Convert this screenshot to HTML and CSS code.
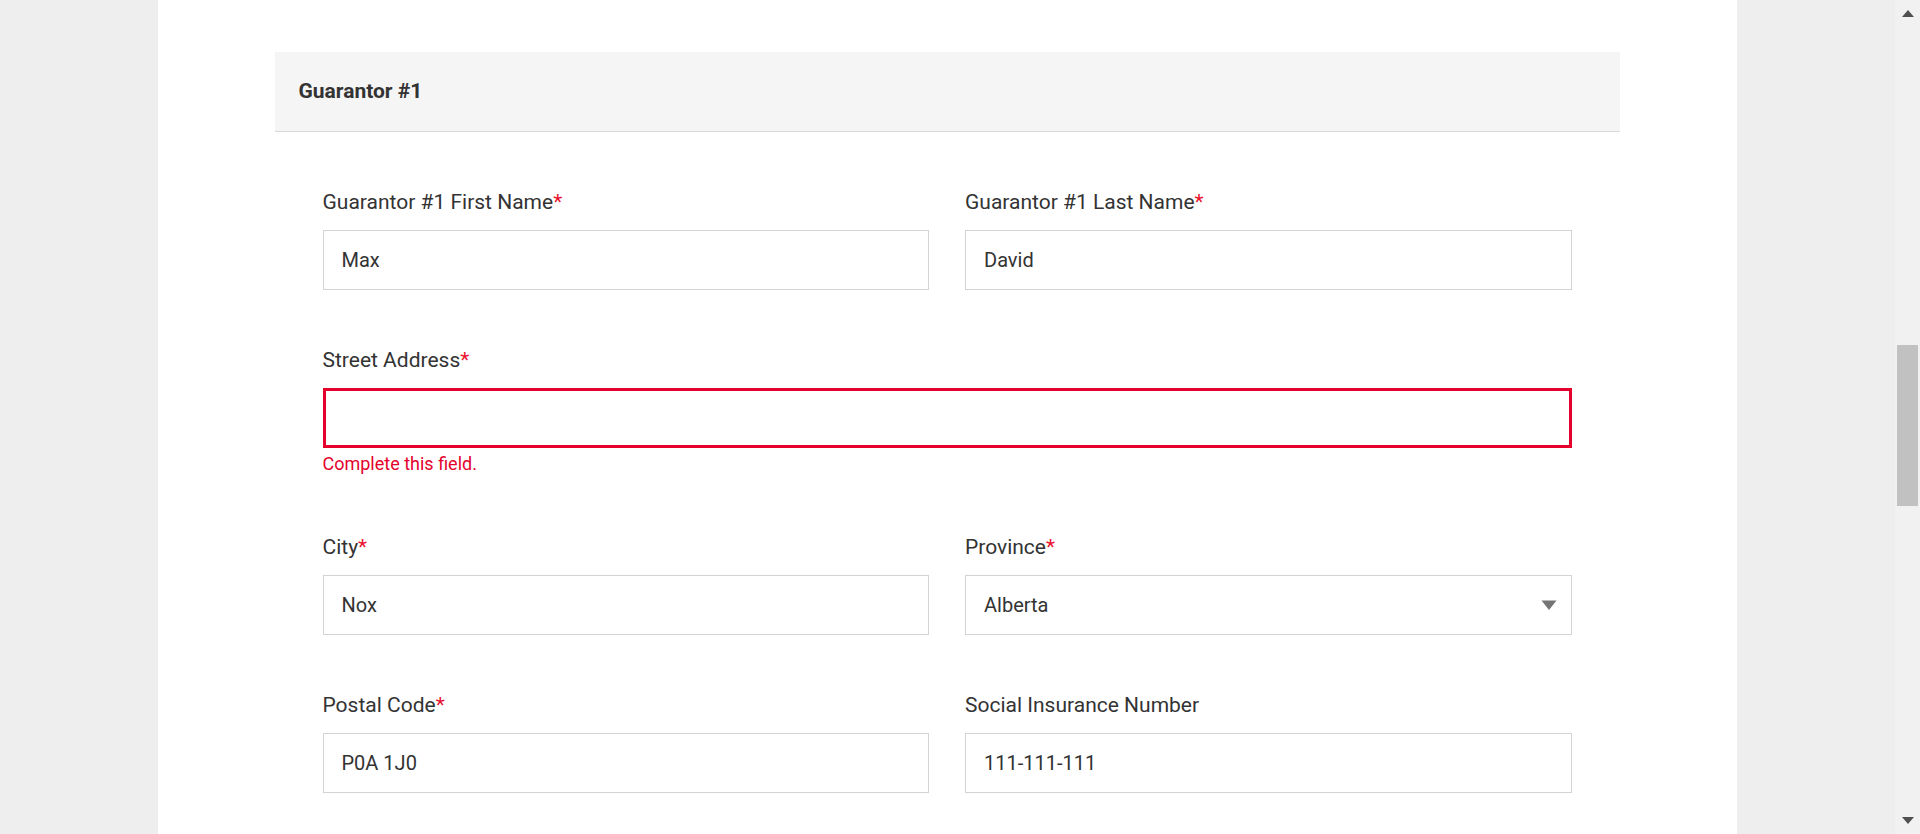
FILE: index.html
```html
<!DOCTYPE html>
<html lang="en">
<head>
<meta charset="utf-8">
<title>Guarantor #1</title>
<link rel="stylesheet" href="styles.css">
</head>
<body>
<div class="page">
  <main class="panel">
    <section class="card">
      <header class="card-header">
        <h2 class="card-title">Guarantor #1</h2>
      </header>
      <form class="form-grid">
        <div class="field">
          <label class="field-label" for="g1-first">Guarantor #1 First Name<span class="req">*</span></label>
          <input class="field-input" id="g1-first" type="text" value="Max">
        </div>
        <div class="field">
          <label class="field-label" for="g1-last">Guarantor #1 Last Name<span class="req">*</span></label>
          <input class="field-input" id="g1-last" type="text" value="David">
        </div>
        <div class="field field-wide">
          <label class="field-label" for="g1-street">Street Address<span class="req">*</span></label>
          <input class="field-input field-input-error" id="g1-street" type="text" value="">
          <div class="field-error">Complete this field.</div>
        </div>
        <div class="field">
          <label class="field-label" for="g1-city">City<span class="req">*</span></label>
          <input class="field-input" id="g1-city" type="text" value="Nox">
        </div>
        <div class="field">
          <label class="field-label" for="g1-prov">Province<span class="req">*</span></label>
          <div class="select-wrap">
            <select class="field-input field-select" id="g1-prov">
              <option selected>Alberta</option>
              <option>British Columbia</option>
              <option>Manitoba</option>
              <option>Ontario</option>
            </select>
            <svg class="select-arrow" width="16" height="10" viewBox="0 0 16 10" aria-hidden="true"><path d="M0.5 0.5 H15.5 L8 10 Z" fill="#757575"/></svg>
          </div>
        </div>
        <div class="field">
          <label class="field-label" for="g1-postal">Postal Code<span class="req">*</span></label>
          <input class="field-input" id="g1-postal" type="text" value="P0A 1J0">
        </div>
        <div class="field">
          <label class="field-label" for="g1-sin">Social Insurance Number</label>
          <input class="field-input" id="g1-sin" type="text" value="111-111-111">
        </div>
      </form>
    </section>
  </main>
</div>
<div class="scrollbar" aria-hidden="true">
  <div class="sb-btn">
    <svg width="12" height="7" viewBox="0 0 12 7"><path d="M6 0 L12 7 H0 Z" fill="#505050"/></svg>
  </div>
  <div class="sb-track"><div class="sb-thumb"></div></div>
  <div class="sb-btn sb-btn-down">
    <svg width="12" height="7" viewBox="0 0 12 7"><path d="M0 0 H12 L6 7 Z" fill="#505050"/></svg>
  </div>
</div>
</body>
</html>
```
FILE: styles.css
```css
html, body {
  margin: 0;
  padding: 0;
  height: 834px;
  overflow: hidden;
}

body {
  display: flex;
  background: #eeeeee;
  font-family: Roboto, "Liberation Sans", Arial, sans-serif;
  color: #333333;
}

.page {
  flex: 1;
  display: flex;
  justify-content: center;
  height: 834px;
}

.panel {
  width: 1579px;
  background: #ffffff;
  padding-top: 52px;
  box-sizing: border-box;
  display: flex;
  justify-content: center;
}

.card {
  width: 1345px;
  margin-right: 1px;
}

.card-header {
  height: 79px;
  background: #f5f5f5;
  border-bottom: 1px solid #dadada;
  display: flex;
  align-items: center;
  padding: 0 24px;
}

.card-title {
  margin: 0;
  font-size: 21px;
  font-weight: 700;
  color: #333333;
  line-height: 1;
}

.form-grid {
  display: grid;
  grid-template-columns: 1fr 1fr;
  column-gap: 36px;
  padding: 55px 48px 0 48px;
}

.field {
  display: flex;
  flex-direction: column;
  margin-bottom: 55px;
  min-width: 0;
}

.field-wide {
  grid-column: 1 / span 2;
}

.field-label {
  font-size: 21px;
  line-height: 30px;
  margin-bottom: 13px;
  color: #333333;
}

.req {
  color: #e8132e;
}

.field-input {
  box-sizing: border-box;
  width: 100%;
  height: 60px;
  margin: 0;
  padding: 0 18px;
  border: 1px solid #d3d3d3;
  border-radius: 0;
  background: #ffffff;
  font-family: inherit;
  font-size: 20px;
  color: #333333;
  outline: none;
}

.field-input-error {
  border: 3px solid #e4022c;
  padding: 0 16px;
}

.field-error {
  margin-top: 3px;
  font-size: 18px;
  line-height: 26px;
  color: #e4022c;
}

.select-wrap {
  position: relative;
}

.field-select {
  appearance: none;
  -webkit-appearance: none;
  padding-right: 48px;
}

.select-arrow {
  position: absolute;
  right: 15px;
  top: 25px;
  pointer-events: none;
}

.scrollbar {
  width: 25px;
  height: 834px;
  background: #f1f1f1;
  display: flex;
  flex-direction: column;
  flex-shrink: 0;
}

.sb-btn {
  height: 25px;
  display: flex;
  justify-content: center;
  align-items: flex-start;
  padding-top: 10px;
  box-sizing: border-box;
  padding-left: 1px;
}

.sb-btn-down {
  align-items: flex-end;
  padding-top: 0;
  padding-bottom: 10px;
}

.sb-track {
  flex: 1;
  display: flex;
  flex-direction: column;
}

.sb-thumb {
  margin-top: 320px;
  margin-left: 2px;
  width: 21px;
  height: 161px;
  background: #c1c1c1;
}
```
